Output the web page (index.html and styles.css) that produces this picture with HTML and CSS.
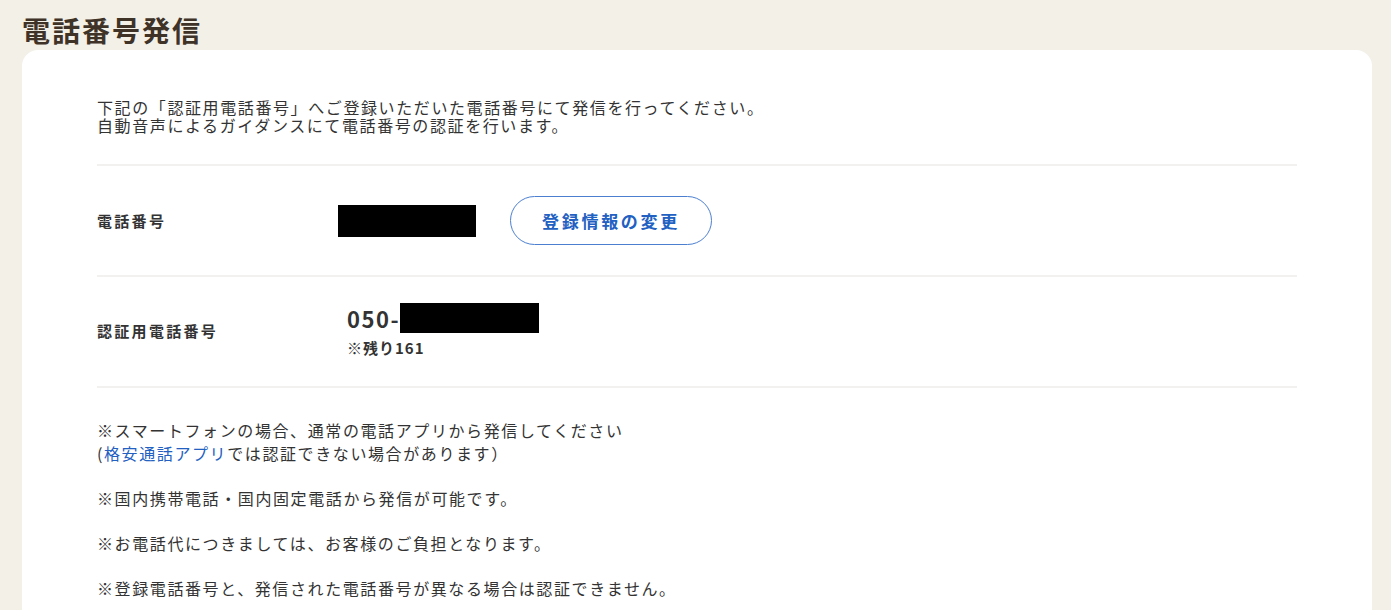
FILE: index.html
```html
<!DOCTYPE html>
<html lang="ja">
<head>
<meta charset="utf-8">
<title>電話番号発信</title>
<link rel="stylesheet" href="styles.css">
</head>
<body>
<div class="page">
  <h1 class="title">電話番号発信</h1>
  <section class="card">
    <p class="lead">下記の「認証用電話番号」へご登録いただいた電話番号にて発信を行ってください。<br>自動音声によるガイダンスにて電話番号の認証を行います。</p>
    <div class="divider"></div>
    <div class="row row-phone">
      <div class="label">電話番号</div>
      <div class="value value-phone">
        <span class="mask mask-phone"></span>
        <a class="btn" href="#">登録情報の変更</a>
      </div>
    </div>
    <div class="divider"></div>
    <div class="row row-auth">
      <div class="label">認証用電話番号</div>
      <div class="value value-auth">
        <div class="auth-number"><span class="num">050-</span><span class="mask mask-auth"></span></div>
        <div class="remain">※残り161</div>
      </div>
    </div>
    <div class="divider"></div>
    <div class="notes">
      <p>※スマートフォンの場合、通常の電話アプリから発信してください<br>(<a class="link" href="#">格安通話アプリ</a>では認証できない場合があります）</p>
      <p>※国内携帯電話・国内固定電話から発信が可能です。</p>
      <p>※お電話代につきましては、お客様のご負担となります。</p>
      <p>※登録電話番号と、発信された電話番号が異なる場合は認証できません。</p>
    </div>
  </section>
</div>
</body>
</html>
```

FILE: styles.css
```css
html, body {
  margin: 0;
  padding: 0;
  background: #f3f0e8;
  font-family: "Noto Sans CJK JP", "Noto Sans", sans-serif;
  color: #333333;
  overflow: hidden;
}

.page {
  padding: 0 19px 0 22px;
}

.title {
  margin: 12px 0 2px;
  font-size: 28px;
  line-height: 36px;
  font-weight: 700;
  letter-spacing: 2px;
  color: #3f3328;
}

.card {
  background: #ffffff;
  border-radius: 16px;
  padding: 48px 75px 40px;
  min-height: 700px;
}

.lead {
  margin: 0 0 30px;
  font-size: 16px;
  line-height: 18px;
  letter-spacing: 1.6px;
}

.divider {
  height: 2px;
  background: #f2f1ef;
}

.row {
  display: flex;
  align-items: center;
}

.row-phone {
  padding: 30px 0;
}

.row-auth {
  padding: 26px 0 28px;
}

.label {
  width: 241px;
  flex: none;
  font-size: 15px;
  font-weight: 700;
  letter-spacing: 2.3px;
  color: #333333;
}

.value-phone {
  display: flex;
  align-items: center;
  gap: 34px;
}

.mask {
  display: inline-block;
  background: #000000;
}

.mask-phone {
  width: 138px;
  height: 32px;
}

.btn {
  display: flex;
  align-items: center;
  justify-content: center;
  width: 200px;
  height: 47px;
  border: 1.5px solid #4c7fd0;
  border-radius: 26px;
  color: #2260c2;
  font-size: 17px;
  font-weight: 700;
  letter-spacing: 2.7px;
  text-decoration: none;
}

.value-auth {
  padding-left: 9px;
}

.auth-number {
  display: flex;
  align-items: center;
  height: 30px;
}

.num {
  font-size: 22px;
  font-weight: 700;
  letter-spacing: 1.5px;
  color: #333333;
}

.mask-auth {
  width: 139px;
  height: 30px;
}

.remain {
  margin-top: 5px;
  font-size: 15px;
  line-height: 20px;
  font-weight: 700;
  letter-spacing: 1px;
  color: #333333;
}

.notes {
  padding-top: 31px;
}

.notes p {
  margin: 0 0 22px;
  font-size: 16px;
  line-height: 23px;
  letter-spacing: 1.6px;
}

.link {
  color: #2260c2;
  text-decoration: none;
}
```
